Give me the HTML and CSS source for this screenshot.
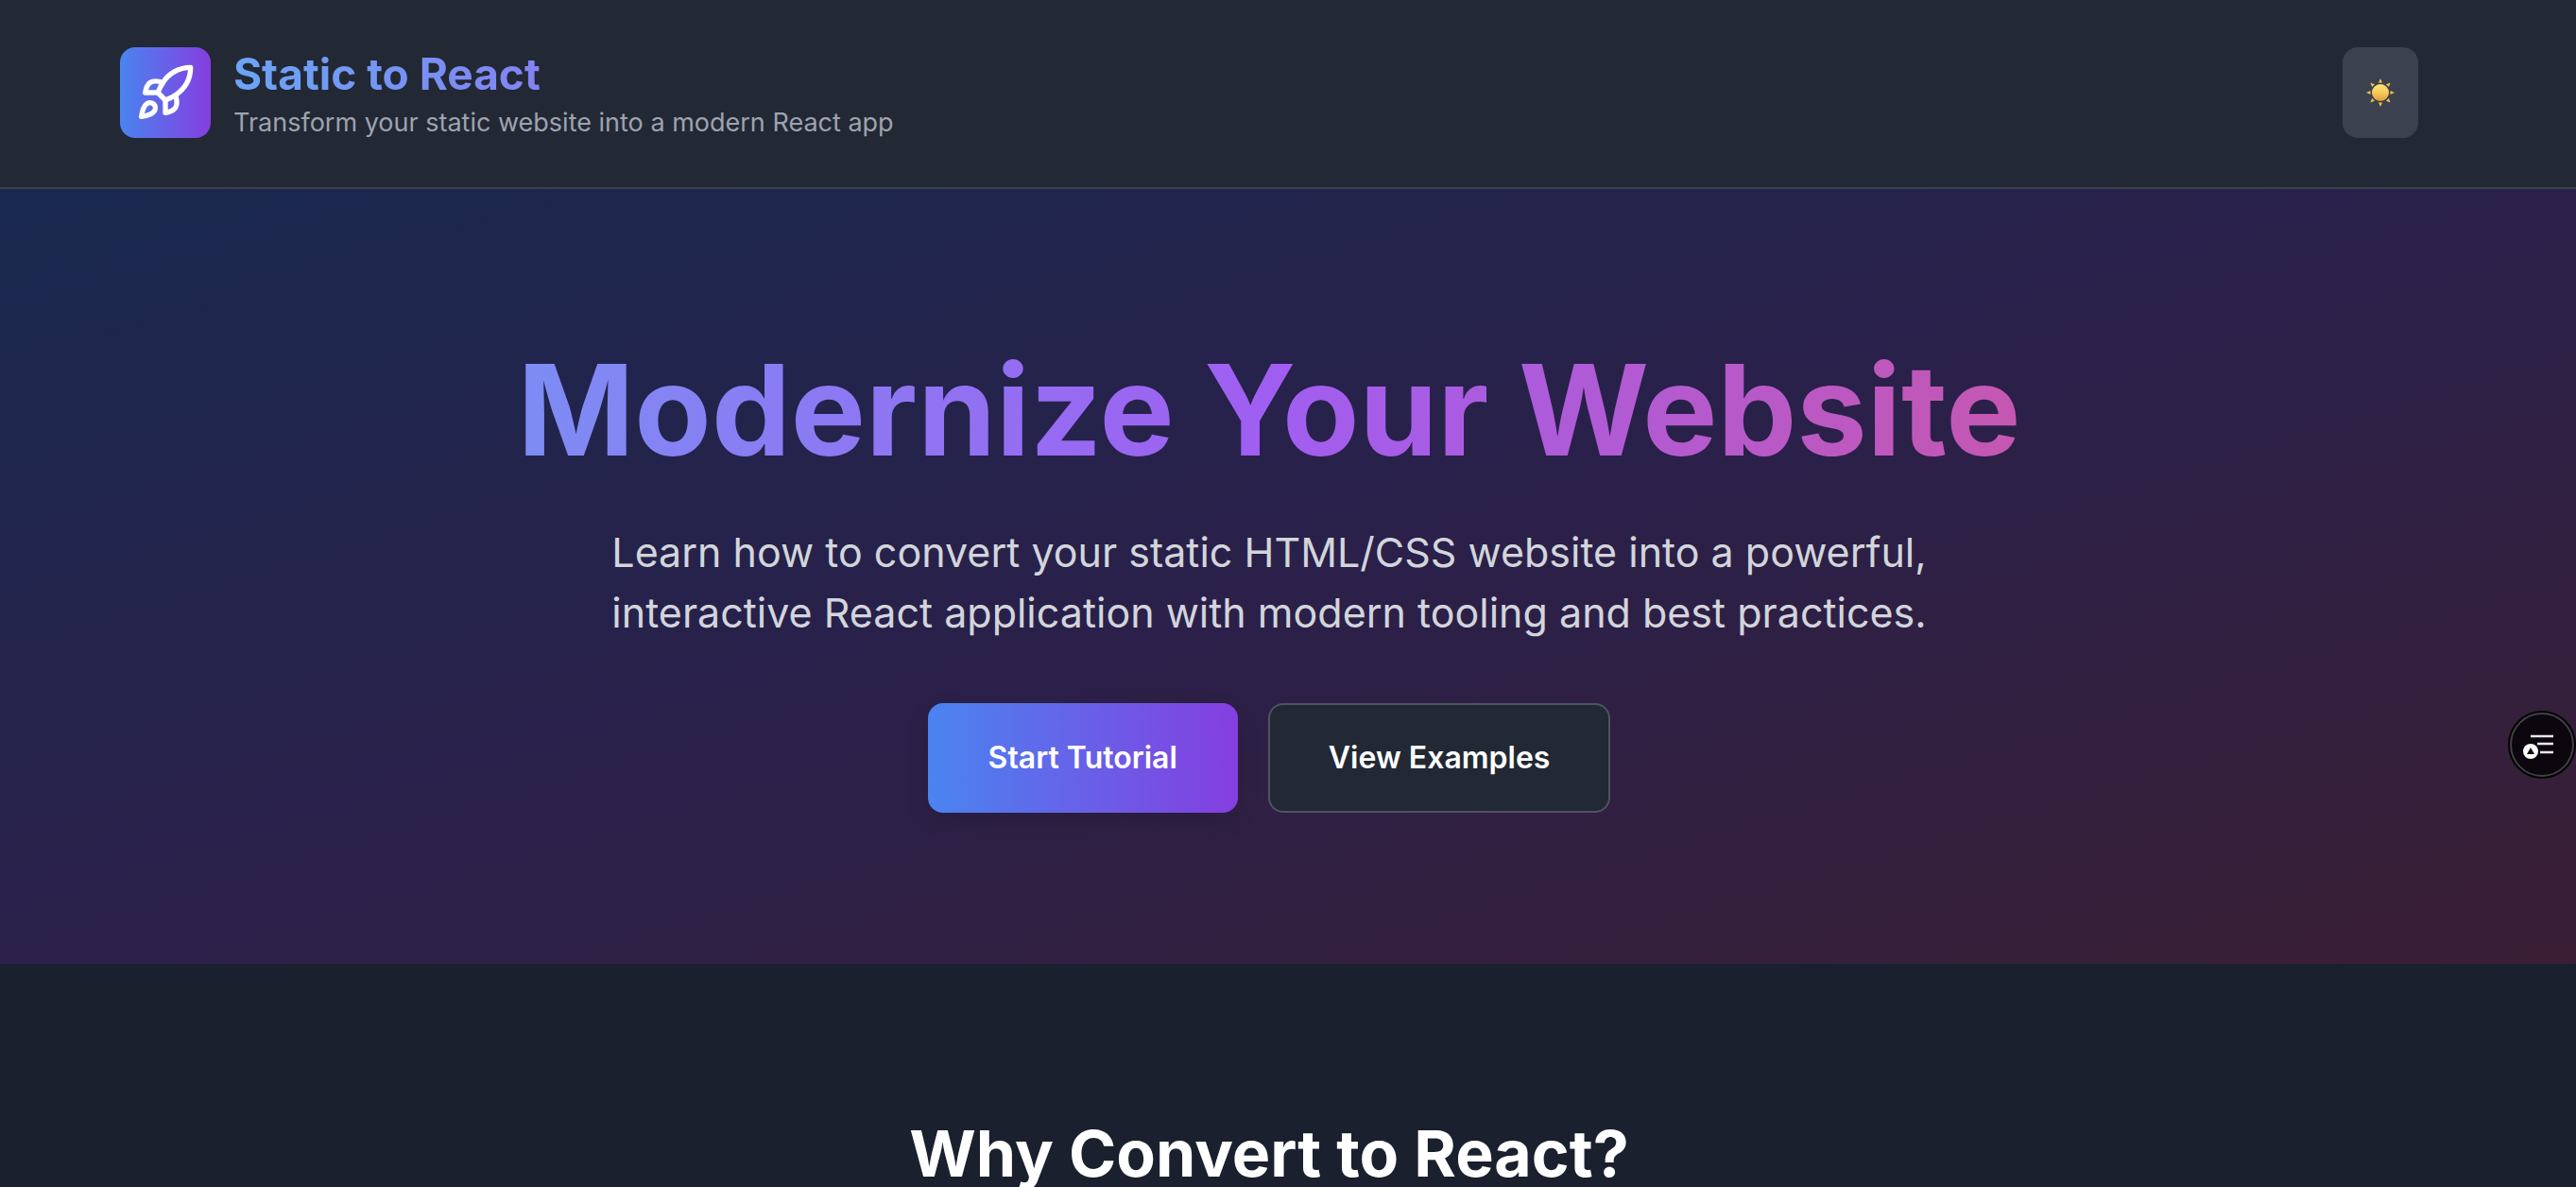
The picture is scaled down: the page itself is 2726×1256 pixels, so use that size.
FILE: index.html
```html
<!DOCTYPE html>
<html lang="en">
<head>
<meta charset="utf-8">
<title>Static to React</title>
<link rel="stylesheet" href="styles.css">
</head>
<body>
<header class="site-header">
  <div class="container header-row">
    <div class="brand">
      <div class="logo">
        <svg width="64" height="64" viewBox="0 0 24 24" fill="none" stroke="currentColor" stroke-width="2" stroke-linecap="round" stroke-linejoin="round" aria-hidden="true">
          <path d="M4.5 16.5c-1.5 1.26-2 5-2 5s3.74-.5 5-2c.71-.84.7-2.13-.09-2.91a2.18 2.18 0 0 0-2.91-.09z"/>
          <path d="m12 15-3-3a22 22 0 0 1 2-3.950A12.880 12.880 0 0 1 22 2c0 2.720-.78 7.500-6 11a22.350 22.350 0 0 1-4 2z"/>
          <path d="M9 12H4s.55-3.030 2-4c1.620-1.080 5 0 5 0"/>
          <path d="M12 15v5s3.030-.55 4-2c1.080-1.620 0-5 0-5"/>
        </svg>
      </div>
      <div class="brand-text">
        <p class="brand-name">Static to React</p>
        <p class="brand-tagline">Transform your static website into a modern React app</p>
      </div>
    </div>
    <button class="theme-toggle" type="button" aria-label="Toggle theme">
      <svg width="32" height="32" viewBox="0 0 32 32" aria-hidden="true">
        <defs>
          <linearGradient id="sun" x1="0" y1="0" x2="0" y2="1">
            <stop offset="0" stop-color="#fbe57c"/>
            <stop offset=".5" stop-color="#f5cd55"/>
            <stop offset="1" stop-color="#e59a3c"/>
          </linearGradient>
        </defs>
        <circle cx="16" cy="16" r="9" fill="url(#sun)"/>
        <g fill="#f2c04f">
          <path id="ray" d="M16 1l2 4.500h-4z"/>
          <use href="#ray" transform="rotate(45 16 16)"/>
          <use href="#ray" transform="rotate(90 16 16)"/>
          <use href="#ray" transform="rotate(135 16 16)"/>
          <use href="#ray" transform="rotate(180 16 16)"/>
          <use href="#ray" transform="rotate(225 16 16)"/>
          <use href="#ray" transform="rotate(270 16 16)"/>
          <use href="#ray" transform="rotate(315 16 16)"/>
        </g>
      </svg>
    </button>
  </div>
</header>
<main>
  <section class="hero">
    <div class="container">
      <h1 class="hero-title">Modernize Your Website</h1>
      <p class="hero-lead">Learn how to convert your static HTML/CSS website into a powerful, interactive React application with modern tooling and best practices.</p>
      <div class="hero-actions">
        <button class="btn btn-primary" type="button">Start Tutorial</button>
        <button class="btn btn-secondary" type="button">View Examples</button>
      </div>
    </div>
  </section>
  <section class="benefits">
    <div class="container">
      <h2 class="section-title">Why Convert to React?</h2>
    </div>
  </section>
</main>
<button class="reader-button" type="button" aria-label="Open reading panel">
  <svg width="72" height="72" viewBox="0 0 72 72" aria-hidden="true">
    <circle cx="36" cy="36" r="36" fill="#000"/>
    <circle cx="36" cy="36" r="33" fill="#0c060f" stroke="#414044" stroke-width="2"/>
    <path d="M24 27h24M31 35h17M34 44h14" stroke="#e9e7ec" stroke-width="2.500"/>
    <circle cx="24" cy="43" r="9" fill="#0c060f"/>
    <circle cx="24" cy="43" r="8" fill="#fff"/>
    <path d="M24 39l4 7h-8z" fill="#111"/>
  </svg>
</button>
</body>
</html>
```
FILE: styles.css
```css
* {
  box-sizing: border-box;
  margin: 0;
}

html {
  overflow: hidden;
}

body {
  background: #1a202d;
  color: #fff;
  font-family: Inter, "Liberation Sans", sans-serif;
}

button {
  font: inherit;
  color: inherit;
  border: 0;
  cursor: pointer;
}

.container {
  max-width: 2432px;
  margin: 0 auto;
}

.site-header,
.hero,
.benefits {
  padding-left: 64px;
  padding-right: 104px;
}

.site-header {
  padding-top: 46px;
  padding-bottom: 48px;
  background: #222834;
  border-bottom: 2px solid #3c4150;
}

.header-row {
  display: flex;
  align-items: center;
  justify-content: space-between;
}

.brand {
  display: flex;
  align-items: center;
  gap: 24px;
}

.logo {
  display: grid;
  place-items: center;
  width: 96px;
  height: 96px;
  border-radius: 16px;
  background: linear-gradient(to right, #4a84f0, #853ee0);
}

.brand-name {
  font-size: 46px;
  line-height: 64px;
  font-weight: 700;
  background: linear-gradient(to right, #6ba5f5, #9c5cf0);
  -webkit-background-clip: text;
  background-clip: text;
  color: transparent;
}

.brand-tagline {
  font-size: 27px;
  line-height: 40px;
  color: #9ea3af;
}

.theme-toggle {
  display: grid;
  place-items: center;
  width: 80px;
  height: 96px;
  padding: 0;
  border-radius: 16px;
  background: #3c4150;
}

.hero {
  padding-top: 160px;
  padding-bottom: 160px;
  text-align: center;
  background: linear-gradient(to bottom right, #18284e, #2a204a 50%, #3a1f34);
}

.hero-title {
  margin-bottom: 44px;
  font-size: 133px;
  line-height: 148px;
  font-weight: 700;
  background: linear-gradient(to right, #6ba5f5, #a05ef1, #d8538f);
  -webkit-background-clip: text;
  background-clip: text;
  color: transparent;
}

.hero-lead {
  max-width: 1536px;
  margin: 0 auto 64px;
  font-size: 43px;
  line-height: 64px;
  color: #d2d5db;
}

.hero-actions {
  display: flex;
  justify-content: center;
  gap: 32px;
}

.btn {
  padding: 28px 64px;
  border-radius: 16px;
  font-size: 32px;
  line-height: 60px;
  font-weight: 600;
}

.btn-primary {
  background: linear-gradient(to right, #4a84f0, #853ee0);
  box-shadow: 0 8px 24px rgba(0, 0, 0, .12);
}

.btn-secondary {
  background: #222834;
  box-shadow: inset 0 0 0 2px #4d5462;
}

.benefits {
  padding-top: 160px;
  text-align: center;
}

.section-title {
  font-size: 68px;
  line-height: 80px;
  font-weight: 700;
}

.reader-button {
  position: fixed;
  top: 752px;
  right: 0;
  width: 72px;
  height: 72px;
  padding: 0;
  border-radius: 50%;
  background: none;
}

.reader-button svg {
  display: block;
}
```
